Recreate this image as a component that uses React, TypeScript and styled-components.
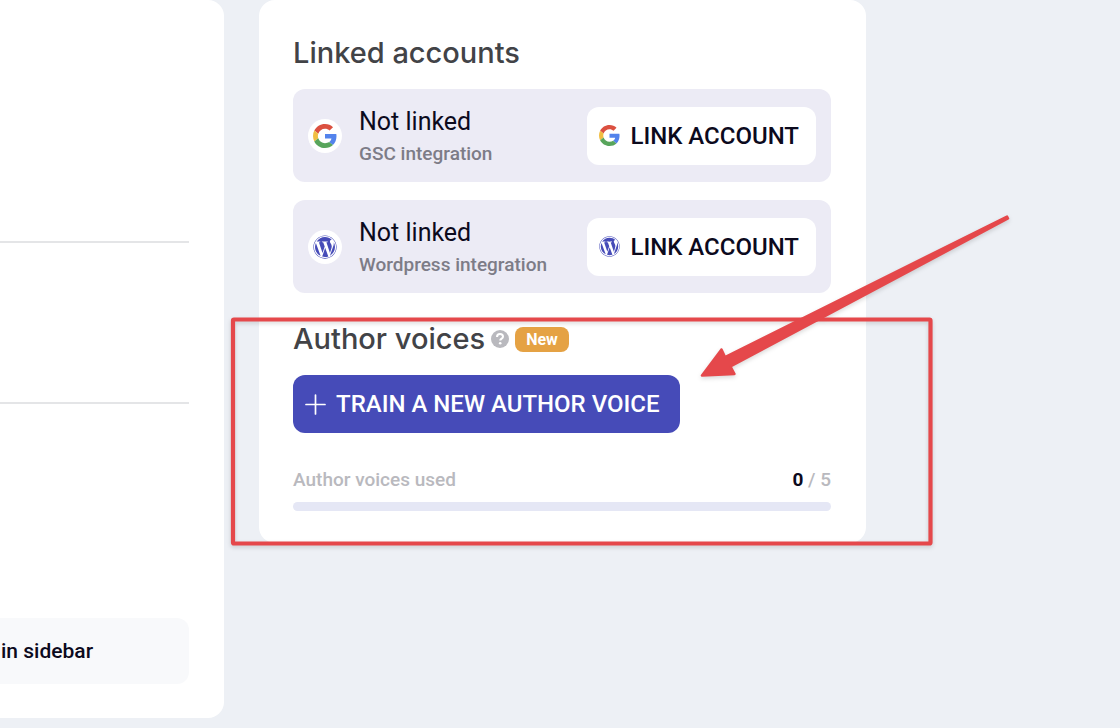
import React from "react";
import styled, { createGlobalStyle } from "styled-components";
import { FaWordpress } from "react-icons/fa";

const GlobalStyle = createGlobalStyle`
  *, *::before, *::after { box-sizing: border-box; }
  body {
    margin: 0;
    background: #edf0f5;
    color: #0c0a1d;
    font-family: Roboto, "Liberation Sans", sans-serif;
  }
  h2, p { margin: 0; }
`;

const Page = styled.main`
  position: relative;
  display: grid;
  grid-template-columns: 224fr 607fr 219fr;
  column-gap: 35px;
  align-items: start;
  min-height: 100vh;
  overflow: hidden;
`;

const Panel = styled.section`
  background: #fff;
  border-radius: 16px;
`;

const SettingsPanel = styled(Panel)`
  display: flex;
  flex-direction: column;
  padding: 82px 35px 34px 0;
  border-radius: 0 16px 16px 0;
`;

const SettingsRow = styled.div`
  height: 161px;
  border-bottom: 2px solid #e4e5e7;
`;

const SidebarOption = styled.div`
  margin-top: 214px;
  padding: 20px 1px;
  background: #f8f9fb;
  border-radius: 0 12px 12px 0;
  font-size: 21px;
  font-weight: 500;
  line-height: 26px;
`;

const AccountPanel = styled(Panel)`
  padding: 34px 35px 32px 34px;
`;

const Heading = styled.h2`
  color: #424347;
  font-family: Inter, "Liberation Sans", sans-serif;
  font-size: 29px;
  font-weight: 500;
  line-height: 38px;
`;

const AccountList = styled.div`
  display: flex;
  flex-direction: column;
  gap: 18px;
  margin: 17px 0 27px;
`;

const AccountRow = styled.div`
  display: flex;
  align-items: center;
  padding: 15px;
  background: #ecebf5;
  border-radius: 12px;
`;

const Avatar = styled.span`
  display: flex;
  flex: none;
  align-items: center;
  justify-content: center;
  width: 34px;
  height: 34px;
  margin-right: 17px;
  background: #fff;
  border-radius: 50%;
  color: #464bb8;
`;

const AccountInfo = styled.div`
  display: flex;
  flex: 1;
  flex-direction: column;
  gap: 4px;
  min-width: 0;
  padding-top: 3px;
`;

const AccountStatus = styled.p`
  font-size: 25px;
  line-height: 30px;
`;

const AccountName = styled.p`
  color: #7d7c87;
  font-size: 19px;
  font-weight: 500;
  line-height: 26px;
`;

const Button = styled.button<{ $primary?: boolean }>`
  display: inline-flex;
  flex: none;
  align-items: center;
  gap: 10px;
  height: 58px;
  padding: 0 ${(p) => (p.$primary ? "20px" : "17px")} 0 12px;
  border: 0;
  border-radius: 12px;
  background: ${(p) => (p.$primary ? "#464bb8" : "#fff")};
  color: ${(p) => (p.$primary ? "#fff" : "#0c0a1d")};
  font-family: inherit;
  font-size: 24px;
  font-weight: 500;
  line-height: 32px;
  white-space: nowrap;
  cursor: pointer;

  svg { color: ${(p) => (p.$primary ? "#fff" : "#464bb8")}; }
`;

const HeadingRow = styled.div`
  display: flex;
  align-items: center;
  gap: 6px;
  margin-bottom: 17px;
`;

const HelpMark = styled.svg`
  flex: none;
  width: 18px;
  height: 18px;
`;

const NewBadge = styled.span`
  padding: 0 11px;
  background: #e5a244;
  border-radius: 8px;
  color: #fff;
  font-size: 16px;
  font-weight: 700;
  line-height: 25px;
`;

const UsageRow = styled.div`
  display: flex;
  justify-content: space-between;
  margin: 34px 0 9px;
  color: #b9b9be;
  font-size: 19px;
  font-weight: 500;
  line-height: 26px;
`;

const UsageCount = styled.strong`
  color: #0c0a1d;
  font-weight: 700;
`;

const UsageTrack = styled.div`
  height: 9px;
  background: #e5e7f5;
  border-radius: 5px;
`;

const Annotation = styled.svg`
  position: absolute;
  top: 0;
  left: 0;
  width: 1120px;
  height: 728px;
  pointer-events: none;
  filter: drop-shadow(0 2px 2px rgba(0, 0, 0, 0.15));
`;

function GoogleLogo({ size }: { size: number }) {
  return (
    <svg width={size} height={size} viewBox="0 0 48 48" aria-hidden="true">
      <path fill="#db5040" d="M24 9.5c3.54 0 6.71 1.22 9.21 3.6l6.85-6.85C35.9 2.38 30.47 0 24 0 14.62 0 6.51 5.38 2.56 13.22l7.98 6.19C12.43 13.72 17.74 9.5 24 9.5z" />
      <path fill="#5383ec" d="M46.98 24.55c0-1.57-.15-3.09-.38-4.55H24v9.02h12.94c-.58 2.96-2.26 5.48-4.78 7.18l7.73 6c4.51-4.18 7.09-10.36 7.09-17.65z" />
      <path fill="#f1be42" d="M10.53 28.59c-.48-1.45-.76-2.99-.76-4.59s.27-3.14.76-4.59l-7.98-6.19C.92 16.46 0 20.12 0 24c0 3.88.92 7.54 2.56 10.78l7.97-6.19z" />
      <path fill="#58a55c" d="M24 48c6.48 0 11.93-2.13 15.89-5.81l-7.73-6c-2.15 1.45-4.92 2.3-8.16 2.3-6.26 0-11.57-4.22-13.47-9.91l-7.98 6.19C6.51 42.62 14.62 48 24 48z" />
    </svg>
  );
}

function Account({ name, Logo }: { name: string; Logo: React.ComponentType<{ size: number }> }) {
  return (
    <AccountRow>
      <Avatar>
        <Logo size={24} />
      </Avatar>
      <AccountInfo>
        <AccountStatus>Not linked</AccountStatus>
        <AccountName>{name}</AccountName>
      </AccountInfo>
      <Button type="button">
        <Logo size={21} />
        LINK ACCOUNT
      </Button>
    </AccountRow>
  );
}

export default function App() {
  return (
    <>
      <GlobalStyle />
      <Page>
        <SettingsPanel>
          <SettingsRow />
          <SettingsRow />
          <SidebarOption>in sidebar</SidebarOption>
        </SettingsPanel>

        <AccountPanel>
          <Heading>Linked accounts</Heading>
          <AccountList>
            <Account name="GSC integration" Logo={GoogleLogo} />
            <Account name="Wordpress integration" Logo={FaWordpress} />
          </AccountList>

          <HeadingRow>
            <Heading>Author voices</Heading>
            <HelpMark viewBox="0 0 18 18" aria-hidden="true">
              <circle cx="9" cy="9" r="9" fill="#b9b9be" />
              <path d="M6 7.1C6 5.1 7.300 4.100 9 4.100s3 1 3 2.600c0 1.900-2.800 2-2.800 3.900" fill="none" stroke="#fff" strokeWidth="2" />
              <circle cx="9.200" cy="13.200" r="1.300" fill="#fff" />
            </HelpMark>
            <NewBadge>New</NewBadge>
          </HeadingRow>
          <Button type="button" $primary>
            <svg width="21" height="21" viewBox="0 0 21 21" aria-hidden="true">
              <path d="M10.5 1v19M1 10.5h19" stroke="currentColor" strokeWidth="1.7" strokeLinecap="round" />
            </svg>
            TRAIN A NEW AUTHOR VOICE
          </Button>
          <UsageRow>
            <span>Author voices used</span>
            <span>
              <UsageCount>0</UsageCount> / 5
            </span>
          </UsageRow>
          <UsageTrack />
        </AccountPanel>

        <Annotation viewBox="0 0 1120 728" aria-hidden="true">
          <rect x="233" y="319.500" width="697.500" height="224" rx="1" fill="none" stroke="#e5484b" strokeWidth="4.200" />
          <path
            d="M1007 216.500 L725 357 L721.500 349.500 L702 375.500 L734.500 374 L730.500 366.500 L1008 218.500 Z"
            fill="#e5484b"
            stroke="#e5484b"
            strokeWidth="2.500"
            strokeLinejoin="round"
          />
        </Annotation>
      </Page>
    </>
  );
}
